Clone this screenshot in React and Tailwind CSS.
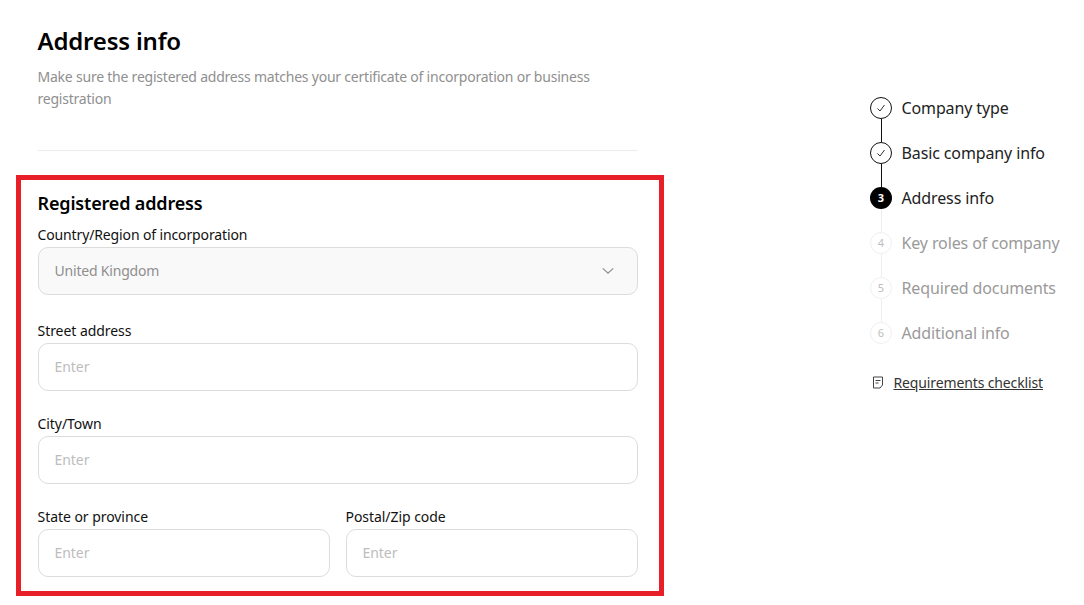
import React from "react";

function Field({ label, placeholder, className = "" }) {
  return (
    <div className={"flex flex-col min-w-0 " + className}>
      <div className="h-[24px] text-[14px] leading-[24px] tracking-[-0.05px] text-[#111] -ml-[0.5px]">{label}</div>
      <div className="h-[48px] rounded-[10px] border border-[#dcdcdc] bg-white pl-[15.5px] pb-[2px] flex items-center text-[14px] tracking-[-0.05px] text-[#bdbdbd]">
        {placeholder}
      </div>
    </div>
  );
}

function Step({ state, n, label, last }) {
  const done = state === "done";
  const active = state === "active";
  return (
    <div className="flex h-[45px] gap-[10px]">
      <div className="relative w-[22px] flex flex-col items-center">
        {done && (
          <div className="w-[22px] h-[22px] rounded-full border border-[#111] bg-white flex items-center justify-center shrink-0">
            <svg width="10" height="10" viewBox="0 0 10 10" fill="none" stroke="#333" strokeWidth="1">
              <path d="M1.5 5.5 L4 8 L8.5 2" />
            </svg>
          </div>
        )}
        {active && (
          <div className="w-[22px] h-[22px] rounded-full bg-black text-white text-[11px] font-bold flex items-center justify-center shrink-0">
            {n}
          </div>
        )}
        {state === "todo" && (
          <div className="w-[22px] h-[22px] rounded-full border border-[#f0f0f0] bg-white text-[#bdbdbd] text-[11px] flex items-center justify-center shrink-0">
            {n}
          </div>
        )}
        {!last && <div className={"w-px flex-1 " + (done ? "bg-[#111]" : "bg-[#eeeeee]")} />}
      </div>
      <div className={"text-[16px] leading-[22px] tracking-[-0.12px] -ml-[0.5px] " + (state === "todo" ? "text-[#9a9a9a]" : "text-[#222]")}>
        {label}
      </div>
    </div>
  );
}

export default function App() {
  return (
    <div className="relative w-[1084px] h-[605px] overflow-hidden bg-white flex font-['Noto_Sans','Open_Sans',sans-serif]">
      <div className="ml-[38px] w-[600px] flex flex-col shrink-0">
        <h1 className="mt-[25px] h-[32px] text-[24px] leading-[32px] font-semibold text-black tracking-[-0.2px] -ml-[0.5px]">Address info</h1>
        <p className="mt-[9px] text-[14px] leading-[22px] tracking-[-0.22px] text-[#8f8f8f] -ml-[0.5px]">
          Make sure the registered address matches your certificate of incorporation or business registration
        </p>
        <div className="mt-[40px] h-px bg-[#ececec]" />
        <h2 className="mt-[40px] h-[24px] text-[18px] leading-[24px] font-semibold tracking-[-0.16px] text-black -ml-[0.5px]">Registered address</h2>
        <div className="mt-[8px] flex flex-col">
          <div className="h-[24px] text-[14px] leading-[24px] tracking-[-0.13px] text-[#111] -ml-[0.5px]">Country/Region of incorporation</div>
          <div className="h-[48px] rounded-[10px] border border-[#dcdcdc] bg-[#f9f9f9] pl-[15.5px] pr-[23px] pb-[1px] flex items-center justify-between text-[14px] tracking-[-0.2px] text-[#8f8f8f]">
            <span>United Kingdom</span>
            <svg width="12" height="12" viewBox="0 0 14 14" fill="none" stroke="#8a8a8a" strokeWidth="1.3">
              <path d="M1 4 L7 9.5 L13 4" />
            </svg>
          </div>
        </div>
        <Field label="Street address" placeholder="Enter" className="mt-[24px]" />
        <Field label="City/Town" placeholder="Enter" className="mt-[21px]" />
        <div className="mt-[21px] flex gap-4">
          <Field label="State or province" placeholder="Enter" className="flex-[292]" />
          <Field label="Postal/Zip code" placeholder="Enter" className="flex-[292]" />
        </div>
      </div>

      <div className="ml-[232px] mt-[97px] w-[210px] flex flex-col">
        <Step state="done" label="Company type" />
        <Step state="done" label="Basic company info" />
        <Step state="active" n="3" label="Address info" />
        <Step state="todo" n="4" label="Key roles of company" />
        <Step state="todo" n="5" label="Required documents" />
        <Step state="todo" n="6" label="Additional info" last />
        <div className="mt-[5px] flex items-center gap-[10px] h-[20px] text-[14px] tracking-[-0.13px] text-[#333]">
          <svg width="12" height="13" viewBox="0 0 12 13" fill="none" stroke="#444" strokeWidth="1" className="ml-[2px]">
            <path d="M1.5 1 H10.5 V9 L8 12 H1.5 Z" />
            <path d="M3.5 4.5 H8.5 M3.5 7 H6.5" />
          </svg>
          <span className="underline -ml-[0.5px]">Requirements checklist</span>
        </div>
      </div>

      <div className="absolute left-[16px] top-[175px] w-[648px] h-[421px] border-[5px] border-[#e81f27] pointer-events-none" />
    </div>
  );
}
